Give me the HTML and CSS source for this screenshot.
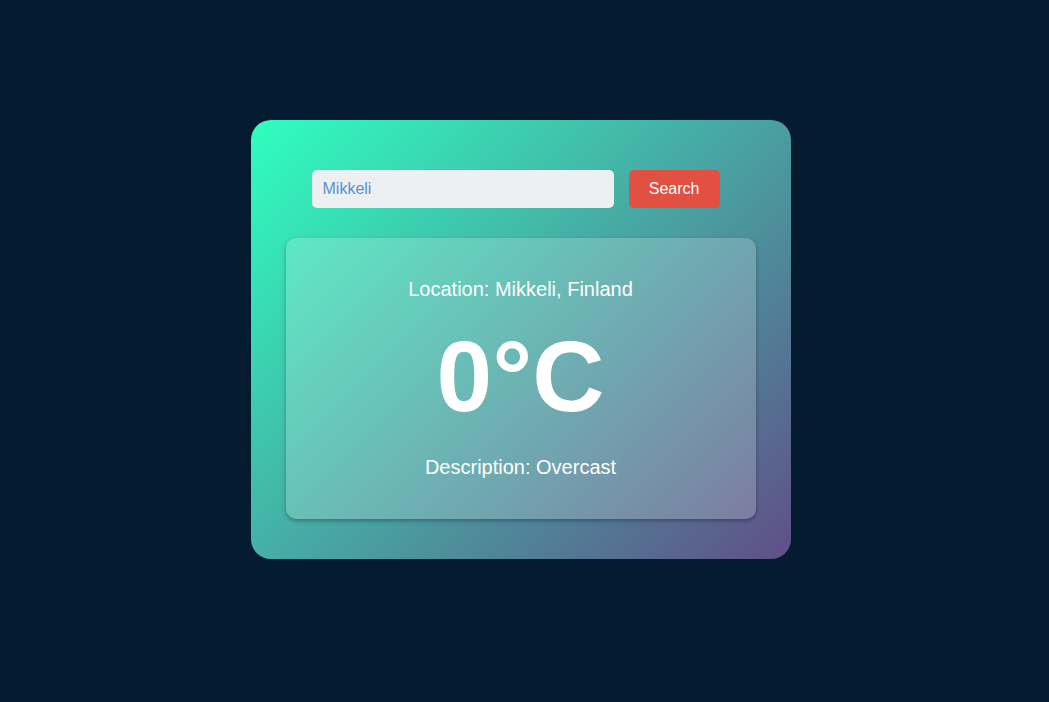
FILE: index.html
```html
<!DOCTYPE html>
<html lang="en">
<head>
<meta charset="utf-8">
<meta name="viewport" content="width=device-width, initial-scale=1">
<title>Weather</title>
<link rel="stylesheet" href="styles.css">
</head>
<body>
<main class="app">
  <form class="search">
    <input class="search-input" type="text" value="Mikkeli" aria-label="City">
    <button class="search-button" type="button">Search</button>
  </form>
  <section class="weather">
    <p class="detail">Location: Mikkeli, Finland</p>
    <h1 class="temperature">0°C</h1>
    <p class="detail">Description: Overcast</p>
  </section>
</main>
</body>
</html>
```
FILE: styles.css
```css
* {
  box-sizing: border-box;
}

body {
  margin: 0;
  padding: 0 8px 24px 0;
  min-height: 100vh;
  display: flex;
  align-items: center;
  justify-content: center;
  background: #051c30;
  color: #fff;
  font-family: "Liberation Sans", Arial, sans-serif;
}

.app {
  width: 100%;
  max-width: 540px;
  padding: 50px 35px 40px;
  border-radius: 20px;
  background: linear-gradient(135deg, #2fffbf, #5f4f87);
  text-align: center;
}

.search {
  display: flex;
  justify-content: center;
  gap: 15px;
  margin: 0 36px 30px 26px;
}

.search-input {
  flex: 1;
  min-width: 0;
  padding: 10px 11px;
  border: 0;
  border-radius: 5px;
  background: #ecf0f1;
  color: #5b8fd6;
  font: 16px/18px "Liberation Sans", Arial, sans-serif;
}

.search-button {
  padding: 10px 20px;
  border: 0;
  border-radius: 5px;
  background: #e15040;
  color: #fff;
  font: 16px/18px "Liberation Sans", Arial, sans-serif;
  cursor: pointer;
}

.weather {
  padding: 40px 20px;
  border-radius: 10px;
  background: rgba(255, 255, 255, 0.2);
  box-shadow: 0 2px 4px rgba(0, 0, 0, 0.3);
}

.detail {
  margin: 0;
  font-size: 20px;
  line-height: 23px;
}

.temperature {
  margin: 18px 0 22px;
  font-size: 100px;
  line-height: 115px;
}
```
